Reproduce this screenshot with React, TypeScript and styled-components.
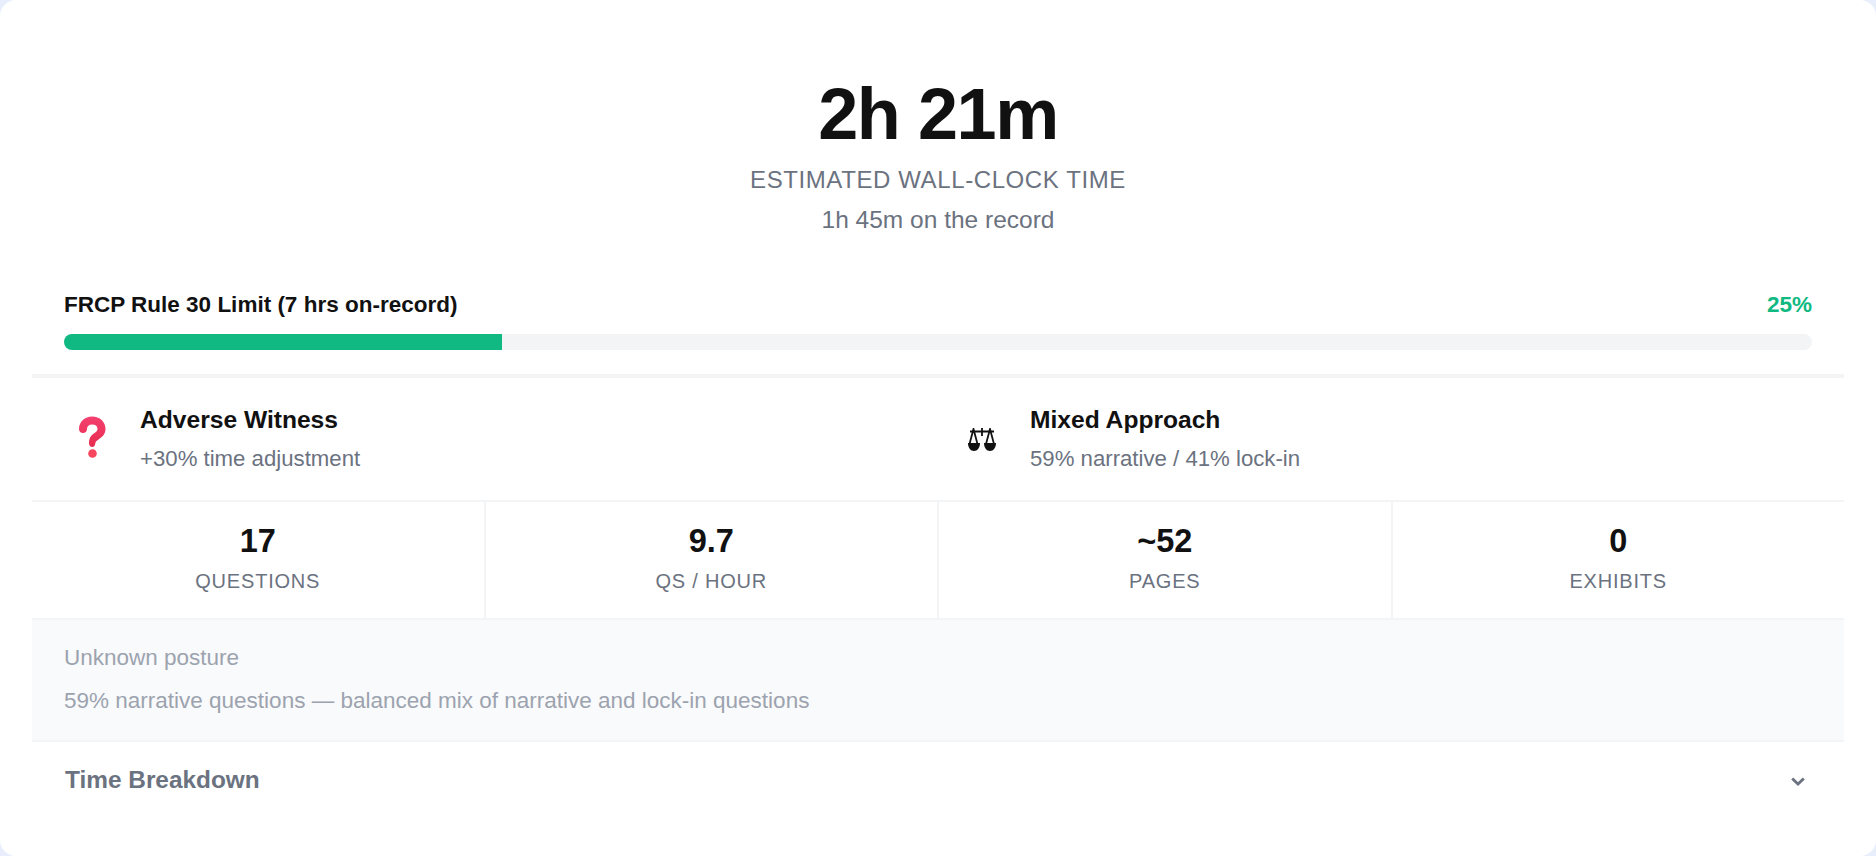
import styled, { createGlobalStyle } from "styled-components"

const GlobalStyle = createGlobalStyle`
    * {
        box-sizing: border-box;
    }

    html, body {
        margin: 0;
        padding: 0;
        background: #e8eefc;
        font-family: "Liberation Sans", Arial, sans-serif;
    }
`

const Card = styled.div`
    width: 1876px;
    height: 856px;
    background: #ffffff;
    border-radius: 16px;
    padding: 0 32px;
    overflow: hidden;
`

const Hero = styled.section`
    height: 278px;
    padding-top: 72px;
    text-align: center;
`

const BigTime = styled.div`
    font-size: 72px;
    line-height: 84px;
    font-weight: 700;
    letter-spacing: -1.44px;
    color: #111111;
`

const HeroLabel = styled.div`
    margin-top: 8px;
    font-size: 24px;
    line-height: 32px;
    letter-spacing: 0.6px;
    color: #6b7280;
    text-transform: uppercase;
`

const HeroNote = styled.div`
    margin-top: 8px;
    font-size: 24.5px;
    line-height: 32px;
    color: #6b7280;
`

const Limit = styled.section`
    height: 100px;
    padding: 9px 32px 0;
    border-bottom: 4px solid #f3f4f6;
`

const LimitHead = styled.div`
    display: flex;
    justify-content: space-between;
    align-items: center;
    height: 36px;
    margin-bottom: 11px;
    font-size: 22.5px;
    font-weight: 700;
    color: #111111;
`

const LimitValue = styled.span`
    color: #10b981;
`

const Track = styled.div`
    height: 16px;
    border-radius: 8px;
    background: #f3f4f6;
    overflow: hidden;
`

const Fill = styled.div<{ $pct: number }>`
    width: ${(p) => p.$pct}%;
    height: 100%;
    background: #10b981;
`

const Badges = styled.section`
    display: grid;
    grid-template-columns: 1fr 1fr;
    gap: 32px;
    height: 124px;
    padding: 0 32px;
    border-bottom: 2px solid #f3f4f6;
`

const Badge = styled.div`
    display: flex;
    align-items: center;
    gap: 20px;
`

const BadgeIcon = styled.div`
    width: 56px;
    display: flex;
    justify-content: center;
    align-items: center;
`

const QuestionSvg = styled.svg`
    margin-top: -4px;
`

const BadgeTitle = styled.div`
    font-size: 24.6px;
    line-height: 34px;
    font-weight: 700;
    color: #111111;
`

const BadgeText = styled.div`
    margin-top: 6px;
    font-size: 22.2px;
    line-height: 32px;
    color: #6b7280;
`

const Stats = styled.section`
    display: grid;
    grid-template-columns: repeat(4, 1fr);
    gap: 2px;
    height: 118px;
    background: #f3f4f6;
    border-bottom: 2px solid #f3f4f6;
`

const Stat = styled.div`
    padding-top: 17px;
    text-align: center;
    background: #ffffff;
`

const StatValue = styled.div`
    font-size: 32.5px;
    line-height: 44px;
    font-weight: 700;
    color: #111111;
`

const StatLabel = styled.div`
    margin-top: 2px;
    font-size: 20px;
    line-height: 32px;
    letter-spacing: 0.8px;
    color: #6b7280;
    text-transform: uppercase;
`

const Notes = styled.section`
    height: 122px;
    padding: 22px 32px 0;
    background: #f9fafb;
    border-bottom: 2px solid #f3f4f6;
    font-size: 22.5px;
    line-height: 32px;
    color: #9ca3af;
`

const NoteLine = styled.div`
    margin-bottom: 11px;
`

const Breakdown = styled.div`
    display: flex;
    justify-content: space-between;
    align-items: center;
    height: 75px;
    padding: 0 38px 0 33px;
    font-size: 24.4px;
    font-weight: 700;
    color: #6b7280;
`

const Chevron = styled.svg`
    width: 16px;
    height: 16px;
    margin-top: 3px;
    fill: none;
    stroke: #6b7280;
    stroke-width: 2.8;
`

function QuestionIcon() {
    return (
        <QuestionSvg width="28" height="42" viewBox="0 0 28 42">
            <defs>
                <linearGradient id="qm" x1="0" y1="0" x2="0" y2="1">
                    <stop offset="0" stopColor="#f4406f" />
                    <stop offset="1" stopColor="#e82c50" />
                </linearGradient>
            </defs>
            <path
                d="M1 13C1 5.500 7 0.500 14 0.500C22 0.500 27.500 6 27.500 12.800C27.500 18.500 24 21.200 20.500 23.500C18.500 24.800 17.500 25.800 17.300 27.500C17 30 15.800 31 14.200 31C12.400 31 11 29.600 11 27C11 21.500 13.500 19 16.500 17C18.800 15.500 19.500 14.500 19.500 12.800C19.500 10 17.500 8.500 14 8.500C11 8.500 9 10.200 9 13C9 15.500 7.200 17 5 17C2.800 17 1 15.500 1 13Z"
                fill="url(#qm)"
            />
            <circle cx="14.500" cy="37.500" r="4.300" fill="#f8465e" />
        </QuestionSvg>
    )
}

function ScalesIcon() {
    return (
        <svg width="28" height="23" viewBox="0 0 28 23">
            <path d="M2 3.500H26M14 0V8" fill="none" stroke="#111111" strokeWidth="1.800" />
            <path d="M5.500 1L1.500 16H9.500ZM22 1L18 16H26Z" fill="none" stroke="#111111" strokeWidth="1.800" />
            <path d="M0 15H12C12 19.500 9.500 23 6 23C2.500 23 0 19.500 0 15ZM16 15H28C28 19.500 25.500 23 22 23C18.500 23 16 19.500 16 15Z" fill="#111111" />
        </svg>
    )
}

export default function App() {
    return (
        <>
            <GlobalStyle />
            <Card>
                <Hero>
                    <BigTime>2h 21m</BigTime>
                    <HeroLabel>Estimated Wall-Clock Time</HeroLabel>
                    <HeroNote>1h 45m on the record</HeroNote>
                </Hero>
                <Limit>
                    <LimitHead>
                        <span>FRCP Rule 30 Limit (7 hrs on-record)</span>
                        <LimitValue>25%</LimitValue>
                    </LimitHead>
                    <Track>
                        <Fill $pct={25.06} />
                    </Track>
                </Limit>
                <Badges>
                    <Badge>
                        <BadgeIcon><QuestionIcon /></BadgeIcon>
                        <div>
                            <BadgeTitle>Adverse Witness</BadgeTitle>
                            <BadgeText>+30% time adjustment</BadgeText>
                        </div>
                    </Badge>
                    <Badge>
                        <BadgeIcon><ScalesIcon /></BadgeIcon>
                        <div>
                            <BadgeTitle>Mixed Approach</BadgeTitle>
                            <BadgeText>59% narrative / 41% lock-in</BadgeText>
                        </div>
                    </Badge>
                </Badges>
                <Stats>
                    <Stat><StatValue>17</StatValue><StatLabel>Questions</StatLabel></Stat>
                    <Stat><StatValue>9.7</StatValue><StatLabel>Qs / Hour</StatLabel></Stat>
                    <Stat><StatValue>~52</StatValue><StatLabel>Pages</StatLabel></Stat>
                    <Stat><StatValue>0</StatValue><StatLabel>Exhibits</StatLabel></Stat>
                </Stats>
                <Notes>
                    <NoteLine>Unknown posture</NoteLine>
                    <NoteLine>59% narrative questions — balanced mix of narrative and lock-in questions</NoteLine>
                </Notes>
                <Breakdown>
                    <span>Time Breakdown</span>
                    <Chevron viewBox="0 0 16 16"><path d="M2.200 5.500L8 11L13.800 5.500" /></Chevron>
                </Breakdown>
            </Card>
        </>
    )
}
